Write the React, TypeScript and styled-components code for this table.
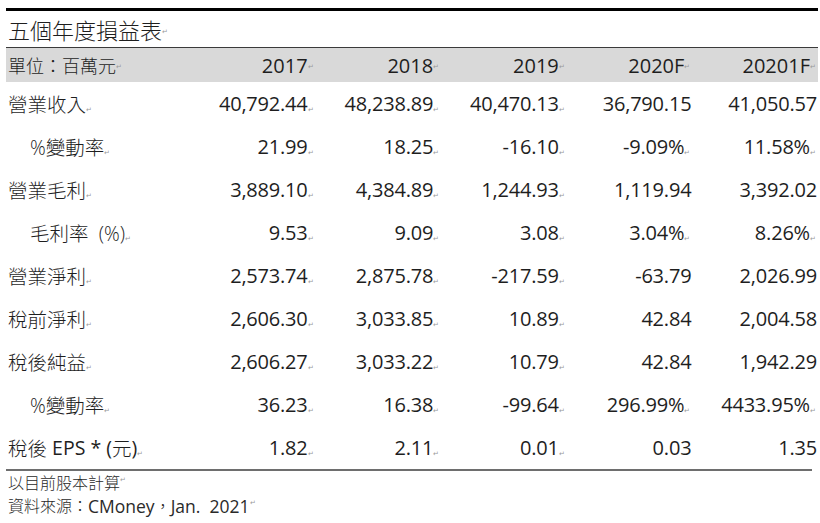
import React from "react";
import styled, { createGlobalStyle } from "styled-components";

const GlobalStyle = createGlobalStyle`
  html, body { margin: 0; padding: 0; background: #ffffff; }
  body { font-family: "Open Sans", "Noto Sans CJK TC", sans-serif; color: #1e1e1e; }
`;

const Page = styled.div`
  width: 820px;
  height: 523px;
  box-sizing: border-box;
  padding: 8px 2px 0 6px;
  overflow: hidden;
`;

const TopRule = styled.div`
  height: 3px;
  background: #000;
`;

const Title = styled.div`
  height: 36px;
  display: flex;
  align-items: center;
  padding-left: 2px;
  font-size: 22px;
  font-weight: 300;
`;

const Grid = styled.div`
  display: grid;
  grid-template-columns: 184px repeat(5, 125.6px);
`;

const HeaderRow = styled.div`
  display: contents;
`;

const HeaderCell = styled.div<{ $align?: "left" | "right" }>`
  height: 35px;
  box-sizing: border-box;
  background: #d9d9d9;
  border-top: 1px solid #3a3a3a;
  display: flex;
  align-items: center;
  justify-content: ${(p) => (p.$align === "left" ? "flex-start" : "flex-end")};
  padding: ${(p) => (p.$align === "left" ? "0 0 0 2px" : "0 2px 0 0")};
  font-size: ${(p) => (p.$align === "left" ? "18px" : "20px")};
  font-weight: ${(p) => (p.$align === "left" ? 300 : 400)};
`;

const LabelCell = styled.div<{ $indent?: boolean }>`
  height: 43px;
  display: flex;
  align-items: center;
  white-space: pre;
  padding-left: ${(p) => (p.$indent ? "24px" : "2px")};
  font-size: 19.5px;
  font-weight: 300;
`;

const Latin = styled.span<{ $size?: number }>`
  font-weight: 400;
  font-size: ${(p) => (p.$size ? `${p.$size}px` : "inherit")};
`;

const ValueCell = styled.div<{ $mark?: boolean }>`
  height: 43px;
  display: flex;
  align-items: center;
  justify-content: flex-end;
  padding-right: ${(p) => (p.$mark ? "2px" : "1px")};
  font-size: 20px;
  letter-spacing: -0.2px;
`;

const Mark = styled.span`
  display: inline-block;
  width: 6px;
  font-size: 7px;
  font-weight: 400;
  color: #9a9a9a;
  align-self: flex-end;
  margin-bottom: 12px;
  line-height: 1;
  text-align: left;
  letter-spacing: 0;
`;

const BottomRule = styled.div`
  height: 2px;
  width: 806px;
  background: #6e6e6e;
`;

const Footer = styled.div`
  padding-top: 1px;
  padding-left: 2px;
  font-size: 16px;
  font-weight: 300;
  line-height: 23px;
  color: #2a2a2a;
`;

const FooterLine = styled.div`
  display: flex;
  align-items: center;
  height: 23px;
  white-space: pre;
`;

type Row = { label: React.ReactNode; indent?: boolean; values: string[]; marks: boolean[] };

const A = [true, true, true, false, false];
const ALL = [true, true, true, true, true];

const rows: Row[] = [
  { label: "營業收入", values: ["40,792.44", "48,238.89", "40,470.13", "36,790.15", "41,050.57"], marks: A },
  { label: "%變動率", indent: true, values: ["21.99", "18.25", "-16.10", "-9.09%", "11.58%"], marks: ALL },
  { label: "營業毛利", values: ["3,889.10", "4,384.89", "1,244.93", "1,119.94", "3,392.02"], marks: A },
  { label: "毛利率  (%)", indent: true, values: ["9.53", "9.09", "3.08", "3.04%", "8.26%"], marks: ALL },
  { label: "營業淨利", values: ["2,573.74", "2,875.78", "-217.59", "-63.79", "2,026.99"], marks: A },
  { label: "稅前淨利", values: ["2,606.30", "3,033.85", "10.89", "42.84", "2,004.58"], marks: A },
  { label: "稅後純益", values: ["2,606.27", "3,033.22", "10.79", "42.84", "1,942.29"], marks: A },
  { label: "%變動率", indent: true, values: ["36.23", "16.38", "-99.64", "296.99%", "4433.95%"], marks: ALL },
  {
    label: (
      <>
        稅後 <Latin>EPS * (</Latin>元<Latin>)</Latin>
      </>
    ),
    values: ["1.82", "2.11", "0.01", "0.03", "1.35"],
    marks: A,
  },
];

const years = ["2017", "2018", "2019", "2020F", "20201F"];

const M = () => <Mark>↵</Mark>;

export default function App() {
  return (
    <>
      <GlobalStyle />
      <Page>
        <TopRule />
        <Title>
          五個年度損益表
          <M />
        </Title>
        <Grid>
          <HeaderRow>
            <HeaderCell $align="left">
              單位：百萬元
              <M />
            </HeaderCell>
            {years.map((y) => (
              <HeaderCell key={y}>
                {y}
                <M />
              </HeaderCell>
            ))}
          </HeaderRow>
          {rows.map((r, i) => (
            <React.Fragment key={i}>
              <LabelCell $indent={r.indent}>
                {r.label}
                <M />
              </LabelCell>
              {r.values.map((v, j) => (
                <ValueCell key={j} $mark={r.marks[j]}>
                  {v}
                  {r.marks[j] && <M />}
                </ValueCell>
              ))}
            </React.Fragment>
          ))}
        </Grid>
        <BottomRule />
        <Footer>
          <FooterLine>
            以目前股本計算
            <M />
          </FooterLine>
          <FooterLine>
            資料來源：<Latin $size={17.5}>CMoney</Latin>，<Latin $size={17.5}>Jan.  2021</Latin>
            <M />
          </FooterLine>
        </Footer>
      </Page>
    </>
  );
}
